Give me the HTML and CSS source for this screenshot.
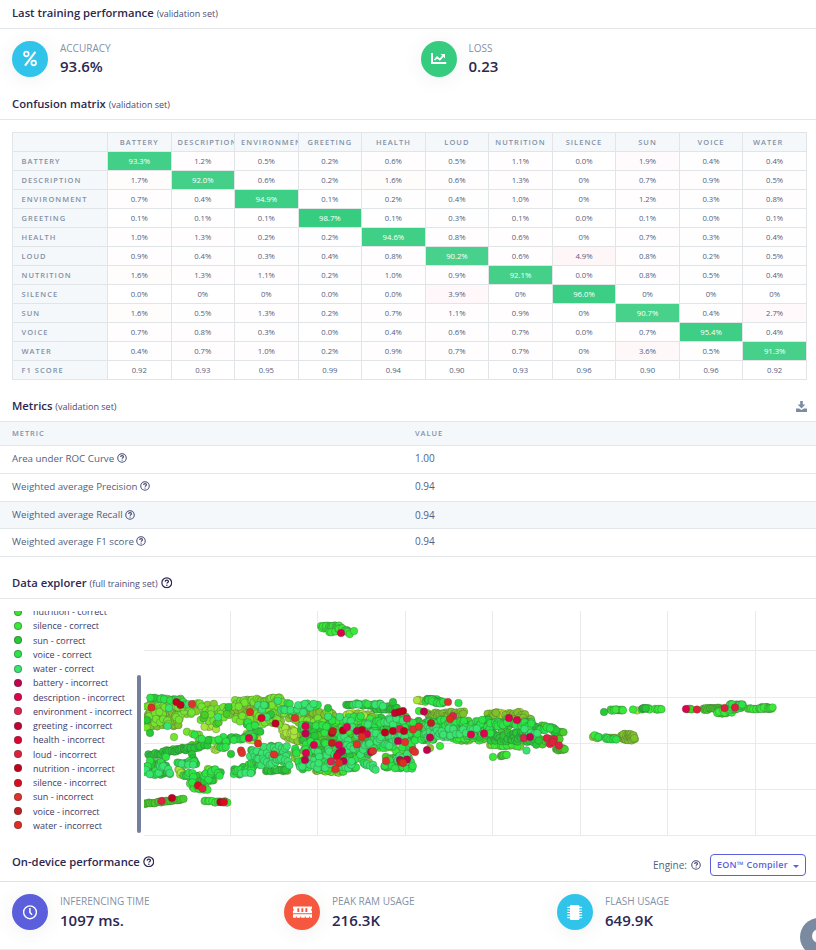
FILE: index.html
```html
<!DOCTYPE html>
<html lang="en">
<head>
<meta charset="utf-8">
<title>Model performance</title>
<link rel="stylesheet" href="styles.css">
</head>
<body>
<svg class="defs" aria-hidden="true">
  <symbol id="help" viewBox="0 0 12 12"><circle cx="6" cy="6" r="5.1" fill="none" stroke="currentColor" stroke-width="1.25"/><path d="M4.3 4.8C4.4 3.6 5.2 3.2 6.1 3.2c1 0 1.7.6 1.7 1.4 0 1.1-1.6 1.2-1.6 2.2" fill="none" stroke="currentColor" stroke-width="1.35"/><circle cx="6.1" cy="8.5" r=".8" fill="currentColor"/></symbol>
</svg>
<main class="page">
  <header class="head head-first"><h2>Last training performance</h2><small>(validation set)</small></header>
  <section class="stats stats-two">
    <div class="stat">
      <span class="disc cyan"><svg width="36" height="36" fill="none" stroke="#fff" stroke-width="1.7"><circle cx="14.4" cy="13" r="2.3"/><circle cx="21.7" cy="22" r="2.3"/><path d="M23.4 10.8 13 24.6" stroke-width="2"/></svg></span>
      <div><div class="label">ACCURACY</div><div class="value">93.6%</div></div>
    </div>
    <div class="stat">
      <span class="disc green"><svg width="36" height="36" fill="none" stroke="#fff"><path d="M11 12v10h14.2" stroke-width="2"/><path d="m13.5 19 2.6-2.7 2.7 2.3 3.2-3.5" stroke-width="1.8"/><path d="M19.5 13H24v4.5z" fill="#fff" stroke="none"/></svg></span>
      <div><div class="label">LOSS</div><div class="value">0.23</div></div>
    </div>
  </section>

  <header class="head head-matrix"><h2>Confusion matrix</h2><small>(validation set)</small></header>
  <div class="matrix-wrap"><table class="matrix" id="matrix"></table></div>

  <header class="head head-metrics"><h2>Metrics</h2><small>(validation set)</small>
    <svg class="download" width="11" height="11" viewBox="0 0 11 11"><path d="M4.2 0h2.6v3.6h2.5L5.5 7.5 1.7 3.6h2.5zM0 7.4h3.2l2.3 1.7 2.3-1.7H11V11H0z" fill="#7c8ba1"/></svg>
  </header>
  <div class="metrics">
    <div class="mrow mhead"><span>METRIC</span><span>VALUE</span></div>
    <div class="mrow"><span class="metric">Area under ROC Curve <svg class="help"><use href="#help"/></svg></span><span>1.00</span></div>
    <div class="mrow"><span class="metric">Weighted average Precision <svg class="help"><use href="#help"/></svg></span><span>0.94</span></div>
    <div class="mrow shaded"><span class="metric">Weighted average Recall <svg class="help"><use href="#help"/></svg></span><span>0.94</span></div>
    <div class="mrow"><span class="metric">Weighted average F1 score <svg class="help"><use href="#help"/></svg></span><span>0.94</span></div>
  </div>

  <header class="head head-explorer"><h2>Data explorer</h2><small>(full training set)</small><svg class="help big"><use href="#help"/></svg></header>
  <section class="explorer">
    <ul class="legend" id="legend"></ul>
    <div class="scroll"><div class="thumb"></div></div>
    <svg class="plot" id="plot" width="672" height="225" viewBox="144 611 672 225"></svg>
  </section>

  <header class="head head-device"><h2>On-device performance</h2><svg class="help big"><use href="#help"/></svg>
    <div class="engine"><span>Engine:</span><svg class="help"><use href="#help"/></svg><button type="button">EON™ Compiler<i></i></button></div>
  </header>
  <section class="stats stats-three">
    <div class="stat">
      <span class="disc indigo"><svg width="36" height="36" fill="none" stroke="#fff"><circle cx="18" cy="18.3" r="6.4" stroke-width="1.4"/><path d="M17.9 14v4.5l2.2 2.2" stroke-width="1.5"/></svg></span>
      <div><div class="label">INFERENCING TIME</div><div class="value">1097 ms.</div></div>
    </div>
    <div class="stat">
      <span class="disc red"><svg width="36" height="36"><path d="M9 12.4h19v2.1a1.3 1.3 0 0 0 0 2.4v2.4H9v-2.4a1.3 1.3 0 0 0 0-2.4zM9 20.3h19v3.5h-1.8v-1.3h-1v1.3h-3.4v-1.3h-1v1.3h-3.6v-1.3h-1v1.3h-3.4v-1.3h-1v1.3H9z" fill="#fff"/><path d="M13.4 14.3h1.9v3.8h-1.9zM17.4 14.3h1.9v3.8h-1.9zM21.4 14.3h1.9v3.8h-1.9z" fill="#f5573f"/></svg></span>
      <div><div class="label">PEAK RAM USAGE</div><div class="value">216.3K</div></div>
    </div>
    <div class="stat">
      <span class="disc cyan"><svg width="36" height="36"><rect x="13" y="11" width="9.4" height="15" rx="1" fill="#fff"/><path d="M10.3 13.4h14.8M10.3 16h14.8M10.3 18.5h14.8M10.3 21.1h14.8M10.3 23.6h14.8" stroke="#fff" stroke-width="1.1"/></svg></span>
      <div><div class="label">FLASH USAGE</div><div class="value">649.9K</div></div>
    </div>
  </section>
</main>
<div class="chat"><svg width="38" height="38"><circle cx="19" cy="18" r="7" fill="#fff"/></svg></div>
<script src="script.js"></script>
</body>
</html>
```
FILE: styles.css
```css
* { box-sizing: border-box; }
body { margin: 0; background: #fff; color: #525f7f; font-family: "Open Sans", "Noto Sans", sans-serif; font-size: 10px; overflow: hidden; }
.defs { position: absolute; width: 0; height: 0; }
.page { width: 816px; height: 950px; overflow: hidden; }
.head { display: flex; align-items: center; padding: 0 12px; border-bottom: 1px solid #e4e7ea; color: #32325d; }
.head h2 { margin: 0; font-size: 11.25px; line-height: 16px; font-weight: 600; color: #2c2851; white-space: nowrap; }
.head small { margin: 1px 0 0 3px; font-size: 9px; line-height: 14px; color: #4c4a73; white-space: nowrap; }
.head-first { height: 29px; padding-bottom: 2px; }
.head-matrix { height: 30px; padding-bottom: 1px; }
.head-metrics { height: 42px; padding-top: 11px; }
.head-explorer { height: 42px; padding-top: 11px; }
.head-device { height: 46px; padding-top: 12px; border-color: #dde3ea; }
.head-device h2 { margin-top: -6px; }
.head-device > .help { margin-top: -6px; }
.help { width: 10px; height: 10px; vertical-align: -1.5px; color: #444a73; flex: none; }
.help.big { width: 11.5px; height: 11.5px; margin-left: 3px; color: #2c2851; }
.download { margin-left: auto; margin-right: -3px; }

.stats { display: grid; }
.stats-two { height: 61px; grid-template-columns: 409px 1fr; padding: 12px 12px 0; }
.stats-three { height: 68px; grid-template-columns: 272px 273px 1fr; padding: 12px 12px 0; border-bottom: 1px solid #e9ecef; }
.stat { display: flex; gap: 12px; align-items: flex-start; }
.disc { width: 36px; height: 36px; border-radius: 50%; box-shadow: 0 2px 20px rgba(80, 90, 110, .09); flex: none; }
.disc svg { display: block; }
.cyan { background: #31c4ea; }
.green { background: #35cc7f; }
.indigo { background: #5b5fdb; }
.red { background: #f5573f; }
.label { font-size: 10px; line-height: 14px; color: #8391a7; font-weight: 500; white-space: nowrap; }
.value { margin-top: 1px; font-size: 15px; line-height: 22px; font-weight: 600; color: #2c2851; }
.stats-two .value { margin-top: 0; }
.stats-two .stat + .stat { gap: 11.5px; }

.matrix-wrap { padding: 12px 9px 0 12px; height: 260px; }
.matrix { width: 795px; table-layout: fixed; border-collapse: collapse; }
.matrix th, .matrix td { height: 19px; padding: 0 6px; border: 1px solid #e2e5e8; text-align: center; font-size: 7.7px; line-height: 14px; font-weight: 400; overflow: hidden; white-space: nowrap; }
.matrix th { background: #f4f8fb; color: #8391a7; font-weight: 600; font-size: 7.5px; letter-spacing: 1.02px; }
.matrix .name { text-align: left; padding-left: 8.5px; }
.matrix .last { padding-right: 19px; }
.matrix td.hit { color: #fff; font-weight: 500; }

.mrow { display: grid; grid-template-columns: 403px 1fr; align-items: center; height: 28px; padding: 0 12px 3px; border-bottom: 1px solid #e4e7ea; white-space: nowrap; }
.mrow .metric { font-size: 9.75px; }
.mrow.shaded { background: #f4f8fb; height: 27px; padding-bottom: 1px; }
.mrow.mhead { height: 24px; padding-bottom: 1px; background: #f4f8fb; font-size: 7.5px; font-weight: 600; color: #8391a7; letter-spacing: .9px; }

.explorer { display: flex; height: 237px; padding-top: 12px; }
.legend { list-style: none; margin: 0; padding: 0 0 0 14px; width: 137px; height: 225px; overflow: hidden; display: flex; flex-direction: column; justify-content: flex-end; padding-bottom: 3.5px; }
.legend li { display: flex; align-items: center; gap: 11px; height: 14.25px; flex: none; font-size: 9px; color: #3d3a66; white-space: nowrap; }
.legend i { width: 8px; height: 8px; border-radius: 50%; border: 1px solid rgba(68, 68, 68, .45); }
.scroll { width: 7px; padding-top: 64px; }
.thumb { width: 4px; height: 158px; border-radius: 2px; background: #747e9d; }
.plot { display: block; }
.plot line { stroke: #eaeaea; stroke-width: 1; }
.plot circle { stroke: #444; stroke-opacity: .42; stroke-width: .7; }

.engine { margin-left: auto; display: flex; align-items: center; gap: 4px; color: #525f7f; }
.engine button { display: flex; align-items: center; justify-content: space-between; width: 96px; height: 22px; margin: 0 -2px 0 5px; padding: 0 6px; border: 1px solid #5b5fdb; border-radius: 4px; background: #fff; color: #5b5fdb; font: 600 9px "Open Sans", sans-serif; letter-spacing: .22px; white-space: nowrap; }
.engine button i { border: 3px solid transparent; border-top-color: #5b5fdb; border-bottom: 0; margin-top: 4px; }
.chat { position: fixed; left: 800px; top: 918px; width: 38px; height: 38px; border-radius: 50%; background: #7a8aa0; }
```
FILE: script.js
```js
const names = ['battery', 'description', 'environment', 'greeting', 'health', 'loud', 'nutrition', 'silence', 'sun', 'voice', 'water'];
const rows = [
  '93.3% 1.2% 0.5% 0.2% 0.6% 0.5% 1.1% 0.0% 1.9% 0.4% 0.4%',
  '1.7% 92.0% 0.6% 0.2% 1.6% 0.6% 1.3% 0% 0.7% 0.9% 0.5%',
  '0.7% 0.4% 94.9% 0.1% 0.2% 0.4% 1.0% 0% 1.2% 0.3% 0.8%',
  '0.1% 0.1% 0.1% 98.7% 0.1% 0.3% 0.1% 0.0% 0.1% 0.0% 0.1%',
  '1.0% 1.3% 0.2% 0.2% 94.6% 0.8% 0.6% 0% 0.7% 0.3% 0.4%',
  '0.9% 0.4% 0.3% 0.4% 0.8% 90.2% 0.6% 4.9% 0.8% 0.2% 0.5%',
  '1.6% 1.3% 1.1% 0.2% 1.0% 0.9% 92.1% 0.0% 0.8% 0.5% 0.4%',
  '0.0% 0% 0% 0.0% 0.0% 3.9% 0% 96.0% 0% 0% 0%',
  '1.6% 0.5% 1.3% 0.2% 0.7% 1.1% 0.9% 0% 90.7% 0.4% 2.7%',
  '0.7% 0.8% 0.3% 0.0% 0.4% 0.6% 0.7% 0.0% 0.7% 95.4% 0.4%',
  '0.4% 0.7% 1.0% 0.2% 0.9% 0.7% 0.7% 0% 3.6% 0.5% 91.3%',
  '0.92 0.93 0.95 0.99 0.94 0.90 0.93 0.96 0.90 0.96 0.92'
];
const last = names.length - 1;
let table = '<colgroup><col style="width:95px">' + '<col>'.repeat(11) + '</colgroup><tr><th></th>' +
  names.map((n, i) => `<th${i === last ? ' class="last"' : ''}>${n.toUpperCase()}</th>`).join('') + '</tr>';
rows.forEach((row, r) => {
  table += `<tr><th class="name">${(names[r] || 'F1 score').toUpperCase()}</th>`;
  row.split(' ').forEach((text, c) => {
    const v = parseFloat(text) / 100;
    let style = '';
    if (text.endsWith('%')) style = r === c ? `background:rgba(52,204,127,${v})` : `background:rgba(245,54,92,${v})`;
    table += `<td${r === c ? ' class="hit"' : ''}${style ? ` style="${style}"` : ''}>${text}</td>`;
  });
  table += '</tr>';
});
document.getElementById('matrix').innerHTML = table;

const good = ['#b8e02e', '#84cc2b', '#a8e63a', '#7cc428', '#72e62e', '#45cf29', '#37e62b', '#37eb37', '#26c936', '#29e645', '#37e66e'];
const bad = ['#c2004e', '#e0004e', '#e0204e', '#c20032', '#e00032', '#e0203c', '#c2001e', '#e00a1e', '#e0322a', '#c21e1e', '#e02d1e'];
const legend = names.slice(6).map((n, i) => [n + ' - correct', good[i + 6]]).concat(names.map((n, i) => [n + ' - incorrect', bad[i]]));
document.getElementById('legend').innerHTML = legend.map(([t, c]) => `<li><i style="background:${c}"></i>${t}</li>`).join('');

let seed = 77;
const rnd = () => (seed = (seed * 16807) % 2147483647) / 2147483647;

// Each cluster: class indices, start x/y, end x/y, vertical spread, point count
const clusters = [
  [[7, 5, 7], 321, 627, 341, 627, 1.5, 24], [[6, 7, 5], 329, 631, 348, 630, 2, 14], [[7], 345, 631, 350, 634, 1, 4], [[7], 354, 631, 354, 631, 0, 1],
  [[8, 9, 7, 4], 149, 698, 184, 701, 1, 20], [[3, 4, 4, 1], 146, 709, 187, 710, 6, 36], [[3, 1, 4, 3], 146, 720, 180, 718, 8, 56],
  [[2, 4], 180, 700, 184, 706, 3, 7], [[10], 169, 708, 169, 708, 0, 1], [[10], 167.5, 726, 167.5, 726, 0, 1], [[10], 186, 704, 189, 705, 1, 2], [[8], 147, 720, 147, 720, 0, 1],
  [[4, 4, 1], 187, 710, 230, 711, 7, 30], [[4, 5], 199, 718, 230, 718, 6, 12], [[2, 0], 203, 727, 218, 728, 2, 5], [[10], 218, 717, 218, 717, 0, 1], [[8], 228.5, 707, 228.5, 707, 0, 1],
  [[4, 7], 174, 737, 174, 737, 0, 1], [[4], 186, 731, 204, 737, 1, 3], [[8, 9, 4], 194, 735, 204, 739, 3, 6], [[8], 150, 733, 150, 733, 0, 1],
  [[4, 1, 4], 235, 702, 282, 699, 2, 34], [[4, 1, 3], 230, 711, 282, 710, 5, 44], [[10, 9, 4, 8], 258, 707, 275, 713, 7, 14],
  [[4, 1], 235, 718, 282, 722, 4, 26], [[8, 9, 7], 246, 724, 262, 731, 3, 9], [[1, 4, 3], 277, 706, 303, 720, 6, 34], [[10, 9, 7, 4], 277, 704, 304, 712, 6, 22],
  [[10, 9], 298, 705, 320, 706, 2, 9], [[8], 328, 708, 328, 708, 0, 1],
  [[8], 147, 756, 168, 752, 1.5, 11], [[8, 8, 5], 166, 751, 194, 748, 1.5, 26], [[8, 5], 190, 748, 208, 743, 2.5, 18], [[9, 7, 8], 205, 739, 225, 739, 2, 5],
  [[8, 9, 7], 218, 741, 240, 738, 2.5, 10], [[9, 4, 8], 218, 747, 227, 748, 1.5, 7], [[4, 2], 214, 750, 219, 749, 1, 3], [[8, 9], 235, 739, 256, 735, 2, 10],
  [[8, 9, 6], 149, 760, 167, 761, 4, 11], [[10, 9, 8], 144, 770, 171, 770, 5, 26],
  [[9, 10, 8], 177, 763, 197, 763, 2.5, 12], [[8, 9], 192, 755, 195, 763, 2, 4], [[0, 1, 2], 178, 771, 184, 773, 3, 7], [[9, 7], 183, 774, 194, 775, 2, 10],
  [[8, 7, 9, 4], 190, 782, 215, 778, 6, 30], [[4, 0, 2], 207, 770, 212, 769, 2, 5], [[8, 9, 7], 209, 772, 221, 774, 4, 11], [[7, 5], 194, 787, 208, 788, 2, 10],
  [[5], 143, 804, 184, 799, .8, 24], [[7], 203, 801, 213, 801, .3, 5], [[7, 5], 214, 802, 228, 802, .7, 12],
  [[9, 8, 7], 233, 771, 254, 768, 4.5, 20], [[10, 4], 240, 774, 252, 773, 2, 3], [[8], 231, 754, 231, 754, 0, 1], [[0, 2], 242, 736, 258, 738, 3, 9],
  [[10, 9, 10, 8], 250, 754, 288, 751, 7, 44], [[10, 9], 250, 762, 290, 762, 3.5, 26], [[8, 5], 265, 770, 288, 770, 2, 16],
  [[0, 1, 0, 2], 282, 732, 300, 737, 6, 34], [[0, 2, 1], 294, 753, 304, 761, 5, 22], [[9], 295, 747, 297, 753, 2, 3], [[8, 9], 298, 760, 303, 768, 3, 5],
  [[4, 3, 1], 298, 718, 335, 717, 6, 40], [[8, 7, 9], 300, 728, 337, 728, 5, 22], [[4, 1, 0], 300, 732, 345, 732, 7, 32], [[5, 8, 9, 4], 302, 742, 340, 742, 7, 38], [[0, 1, 4], 303, 752, 345, 756, 10, 38], [[10, 9, 8], 302, 757, 342, 756, 8, 36],
  [[4, 6, 1], 316, 769, 344, 770, 3, 44], [[10, 9], 300, 766, 345, 765, 3.5, 20],
  [[8, 10, 9, 8], 346, 704, 384, 705, 1.5, 22], [[8, 8, 5], 374, 708, 398, 708, 2, 18], [[8, 9], 393, 702, 393, 702, 0, 1],
  [[0, 1, 2], 345, 715, 374, 716, 2.5, 24], [[10, 9, 7], 327, 720, 372, 720, 4, 18], [[8, 5, 7, 10], 340, 733, 378, 732, 8, 40],
  [[0, 4, 2], 345, 736, 365, 737, 7, 24], [[10, 9, 8], 343, 749, 371, 749, 6, 28], [[9, 4, 8, 10], 340, 763, 357, 762, 6, 22], [[10, 9, 1], 362, 760, 376, 767, 3, 11],
  [[8, 9, 7, 10], 374, 722, 406, 722, 5.5, 34], [[8, 10, 9, 5], 374, 735, 407, 736, 7, 38], [[10, 9, 4], 373, 746, 395, 747, 3, 14],
  [[8, 9, 5], 384, 762, 413, 763, 6, 40], [[4, 10, 7], 396, 755, 409, 757, 6, 22], [[9, 7, 0], 402, 746, 414, 743, 4, 11],
  [[2, 0], 416, 700, 423, 700, 1, 4], [[8, 9, 7], 425, 700, 444, 702, 2, 22], [[9], 458.5, 703, 458.5, 703, 0, 1], [[7], 419, 711, 419, 711, 0, 1],
  [[1, 3, 3], 427, 715, 465, 713, 2.5, 34], [[8, 9, 8], 408, 725, 440, 724, 4, 36], [[9, 8, 7], 408, 738, 434, 736, 5, 28], [[10, 10, 9], 424, 732, 456, 731, 6, 38],
  [[8, 9, 5], 440, 723, 476, 725, 4, 32], [[5, 9, 8], 446, 732, 475, 733, 4, 30], [[10], 440, 732, 478, 732, 4, 12], [[7, 5, 4], 453, 739, 485, 739, 2, 24], [[8, 9, 5], 470, 730, 493, 731, 7, 42],
  [[0, 0, 3], 487, 715, 526, 714, 2.5, 32], [[0, 3], 505, 718, 532, 720, 2, 20], [[9, 8, 9], 475, 722, 500, 722, 3, 14], [[9, 5, 8], 495, 725, 532, 724, 2.5, 28],
  [[9, 8, 5], 525, 724, 558, 731, 2.5, 28], [[5], 558, 732, 564, 732, .5, 4], [[8, 8, 5], 488, 736, 537, 738, 5, 66], [[4, 7, 1], 490, 744, 522, 745, 2, 18], [[8, 5, 10], 520, 730, 538, 734, 3, 14],
  [[8, 5], 536, 742, 560, 741, 3, 16], [[5], 556, 749, 565, 750, 2, 12], [[10], 526.5, 750.5, 526.5, 750.5, 0, 1], [[7], 493, 757, 493, 757, 0, 1], [[7, 5], 500, 756, 508, 754, .7, 6],
  [[7], 440, 746, 440, 746, 0, 1], [[1], 430, 748, 430, 748, 0, 1],
  [[8], 604, 712, 604, 712, 0, 1], [[7, 5], 610, 710, 624, 710, .6, 14], [[7], 633, 709.5, 633, 709.5, 0, 1], [[2], 637, 710.5, 637, 710.5, 0, 1], [[7, 8], 641, 709, 650, 709, 1, 10], [[2, 7], 655, 709, 662, 709.5, .5, 7],
  [[1, 7, 9], 593, 736, 600, 737, 2, 7], [[9, 3], 605, 738, 617, 739, 1, 14], [[3, 1], 621, 736, 635, 738, 3.2, 38],
  [[5], 687, 709, 692, 709, .5, 4], [[5], 703, 709, 722, 708.5, 1, 18], [[7, 5], 717, 712, 732, 711, 2, 22], [[7, 5, 9], 728, 707, 743, 706, 3, 38], [[5, 7], 748, 709, 764, 708.5, .6, 11], [[7, 5], 762, 708, 773, 708, 1, 14]
];
const points = [];
for (const [classes, x1, y1, x2, y2, spread, n] of clusters) {
  for (let i = 0; i < n; i++) {
    const t = n === 1 ? 0 : (i + rnd() * .8) / n;
    points.push([classes[Math.floor(rnd() * classes.length)], x1 + (x2 - x1) * t, y1 + (y2 - y1) * t + (rnd() * 2 - 1) * spread]);
  }
}
points.sort((a, b) => a[0] - b[0]);

// Misclassified samples: class index, x, y
const wrong = [
  [1,341,633],[10,151.5,707.5],[6,176.5,702],[6,180.5,705],[8,192,704],[10,250,712],[4,261.5,718],[6,275.5,723.5],[8,295,718],[1,305.5,726],[0,305.5,733.5],[1,249,738],[10,258,743.5],[8,241,750.5],[8,242,753],[8,274,754.5],
  [1,314,745],[1,306,753],[0,305,760],[6,332,733],[9,333,731],[9,332,743],[1,339,745],[6,343,730.5],[1,347,727],[0,357,731],[6,362,730],[1,367,734],[10,362,737],[8,357,744.5],[0,342,751],[0,339,753],[4,337,756],[2,331,761.5],[0,343.5,761],[10,339,763],[8,335.5,769],
  [7,198,785.5],[5,202.5,788.5],[5,161.5,801],[6,172,798],[6,220.5,802],[7,224,802],[0,371,752],[8,373,751],[6,385,732.5],[6,393,731],[2,400,729],[6,404,731],[3,395,713],[6,399,712],[6,403,711],[2,407,718.5],[8,413,729.5],[8,419,726.5],[9,431,723],[0,424,711.5],[2,453,716],[10,450,719],[8,448,702],
  [0,430,737.5],[0,427,750],[0,398,741],[8,405,742],[8,413,750],[8,415,752],[8,386,761],[0,400,760],[9,401,762],[0,407,759.5],[10,403,763],[1,471,734.5],[1,484,733.5],[1,509,718],[1,517,720],[2,524,738],[0,530,737],[5,547,738],[5,554,739],[5,550,744],[5,553,742],[5,559,745.5],[1,686,709],[5,697,709.5],[5,724.5,708],[5,735,707.5]
];
const dot = (x, y, color) => `<circle cx="${x.toFixed(1)}" cy="${y.toFixed(1)}" r="3.8" fill="${color}"/>`;
const grid = [230.5, 317.5, 405.5, 492.5, 580.5, 667.5, 755.5].map(x => `<line x1="${x}" x2="${x}" y1="611" y2="836"/>`).join('') +
  [650.5, 697.5, 743.5, 789.5, 835.5].map(y => `<line x1="144" x2="816" y1="${y}" y2="${y}"/>`).join('');
document.getElementById('plot').innerHTML = grid + points.map(p => dot(p[1], p[2], good[p[0]])).join('') + wrong.map(p => dot(p[1], p[2], bad[p[0]])).join('');
```
